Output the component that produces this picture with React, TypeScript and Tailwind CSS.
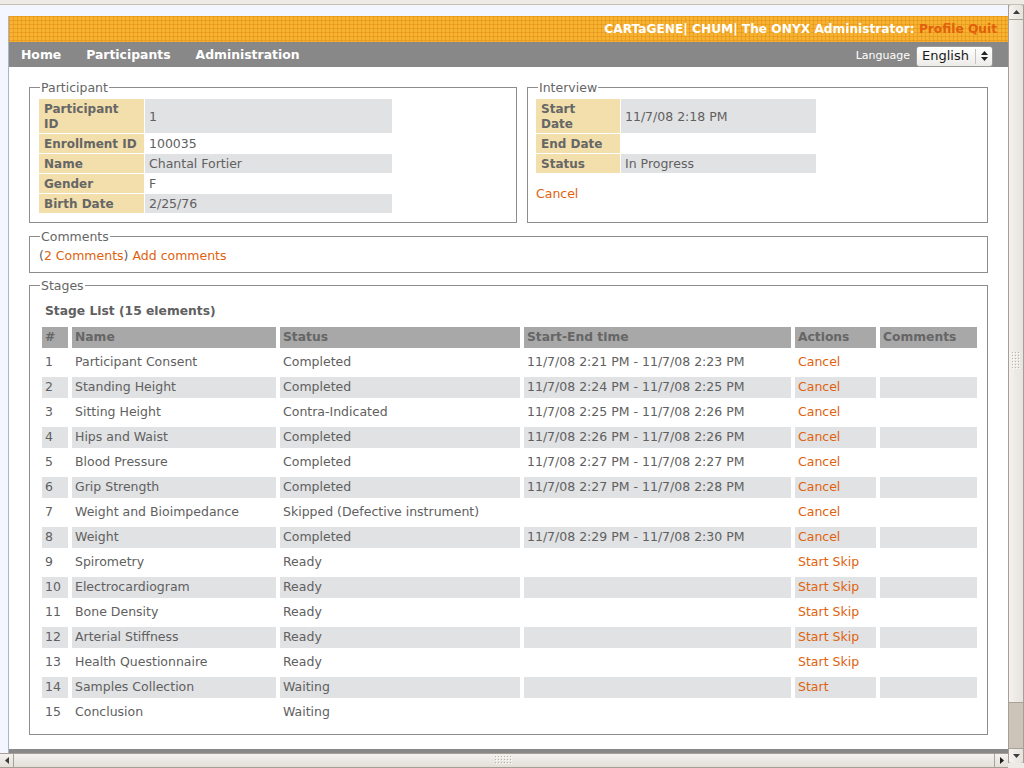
import React from "react";

type Stage = { n: string; name: string; status: string; time: string; actions: string[] };

const T = (a: string, b: string) => `11/7/08 ${a} PM - 11/7/08 ${b} PM`;

const stages: Stage[] = [
  { n: "1", name: "Participant Consent", status: "Completed", time: T("2:21", "2:23"), actions: ["Cancel"] },
  { n: "2", name: "Standing Height", status: "Completed", time: T("2:24", "2:25"), actions: ["Cancel"] },
  { n: "3", name: "Sitting Height", status: "Contra-Indicated", time: T("2:25", "2:26"), actions: ["Cancel"] },
  { n: "4", name: "Hips and Waist", status: "Completed", time: T("2:26", "2:26"), actions: ["Cancel"] },
  { n: "5", name: "Blood Pressure", status: "Completed", time: T("2:27", "2:27"), actions: ["Cancel"] },
  { n: "6", name: "Grip Strength", status: "Completed", time: T("2:27", "2:28"), actions: ["Cancel"] },
  { n: "7", name: "Weight and Bioimpedance", status: "Skipped (Defective instrument)", time: "", actions: ["Cancel"] },
  { n: "8", name: "Weight", status: "Completed", time: T("2:29", "2:30"), actions: ["Cancel"] },
  { n: "9", name: "Spirometry", status: "Ready", time: "", actions: ["Start", "Skip"] },
  { n: "10", name: "Electrocardiogram", status: "Ready", time: "", actions: ["Start", "Skip"] },
  { n: "11", name: "Bone Density", status: "Ready", time: "", actions: ["Start", "Skip"] },
  { n: "12", name: "Arterial Stiffness", status: "Ready", time: "", actions: ["Start", "Skip"] },
  { n: "13", name: "Health Questionnaire", status: "Ready", time: "", actions: ["Start", "Skip"] },
  { n: "14", name: "Samples Collection", status: "Waiting", time: "", actions: ["Start"] },
  { n: "15", name: "Conclusion", status: "Waiting", time: "", actions: [] },
];

function Fieldset({ legend, className, children }: { legend: string; className: string; children: React.ReactNode }) {
  return (
    <fieldset className={className}>
      <legend className="ml-[10px] px-px text-[12.5px] leading-[15px] text-[#666]">{legend}</legend>
      {children}
    </fieldset>
  );
}

function Label({ children }: { children: React.ReactNode }) {
  return (
    <div className="flex items-center bg-[#f2dfab] px-[5px] pb-[1px] pt-[3px] text-[12px] font-bold leading-[15px] text-[#666]">
      {children}
    </div>
  );
}

function Val({ children, grey }: { children?: React.ReactNode; grey?: boolean }) {
  return (
    <div
      className={
        grey
          ? "flex items-center bg-[#e1e2e4] px-[4px] pb-[2px] pt-[2px] text-[12.5px] leading-[15px] text-[#606060]"
          : "flex items-center bg-white px-[4px] pb-[2px] pt-[2px] text-[12.5px] leading-[15px] text-[#606060]"
      }
    >
      {children}
    </div>
  );
}

function Grip({ vertical }: { vertical?: boolean }) {
  const dots: React.ReactNode[] = [];
  const cols = vertical ? 3 : 6;
  const rows = vertical ? 6 : 3;
  for (let c = 0; c < cols; c++) {
    for (let r = 0; r < rows; r++) {
      dots.push(<rect key={`d${c}-${r}`} x={c * 3} y={r * 3} width="1" height="1" fill="#b9b2a8" />);
      dots.push(<rect key={`l${c}-${r}`} x={c * 3 + 1} y={r * 3 + 1} width="1" height="1" fill="#ffffff" />);
    }
  }
  return (
    <svg width={cols * 3} height={rows * 3} viewBox={`0 0 ${cols * 3} ${rows * 3}`}>
      {dots}
    </svg>
  );
}

function VScroll() {
  return (
    <div className="flex h-[758px] w-[16px] flex-col border-x border-[#a79f95] bg-[#cdc4b9]">
      <div className="flex h-[15px] items-center justify-center rounded-t-[3px] border-b border-[#aaa298] bg-gradient-to-r from-[#f5f3f0] to-[#e6e2dc]">
        <svg width="7" height="4" viewBox="0 0 7 4">
          <path d="M0 4 L3.5 0 L7 4Z" fill="#3c3c3c" />
        </svg>
      </div>
      <div className="flex h-[683px] items-center justify-center border-b border-[#aaa298] bg-gradient-to-r from-[#f4f2ef] to-[#e7e3de]">
        <Grip vertical />
      </div>
      <div className="flex-1" />
      <div className="flex h-[15px] items-center justify-center rounded-b-[3px] border-t border-[#aaa298] bg-gradient-to-r from-[#f5f3f0] to-[#e6e2dc]">
        <svg width="7" height="4" viewBox="0 0 7 4">
          <path d="M0 0 L3.5 4 L7 0Z" fill="#3c3c3c" />
        </svg>
      </div>
    </div>
  );
}

function HScroll() {
  return (
    <div className="flex h-[15px] w-[1008px] border-y border-[#a79f95] bg-gradient-to-b from-[#f4f2ef] to-[#e3dfd9]">
      <div className="flex w-[14px] items-center justify-center border-r border-[#aaa298]">
        <svg width="4" height="7" viewBox="0 0 4 7">
          <path d="M4 0 L0 3.5 L4 7Z" fill="#3c3c3c" />
        </svg>
      </div>
      <div className="flex flex-1 items-center justify-center border-r border-[#aaa298]">
        <Grip />
      </div>
      <div className="flex w-[13px] items-center justify-center">
        <svg width="4" height="7" viewBox="0 0 4 7">
          <path d="M0 0 L4 3.5 L0 7Z" fill="#1e1e1e" />
        </svg>
      </div>
    </div>
  );
}

export default function App() {
  return (
    <div className="flex h-[768px] w-[1024px] flex-col overflow-hidden bg-[#edeae5] font-['DejaVu_Sans',sans-serif]">
      <div className="h-[5px] border-b border-[#c8c0b6] bg-[#eeebe7]" />
      <div className="flex h-[763px]">
        <div className="flex w-[1008px] flex-col">
          <div className="h-[748px] overflow-hidden bg-[#f3f6fe] pl-[8px] pt-[11px]">
            <div className="flex h-[737px] w-[1000px] flex-col border-l border-[#a9b6c8] bg-white">
              {/* Orange header */}
              <div className="flex h-[26px] items-center justify-end bg-[#f8b232] bg-[linear-gradient(to_right,rgba(214,128,8,0.35)_1px,transparent_1px),linear-gradient(to_bottom,rgba(214,128,8,0.35)_1px,transparent_1px)] bg-[length:4px_4px] pr-[11px] text-[12.2px] font-bold text-white">
                <span>CARTaGENE| CHUM| The ONYX Administrator:&nbsp;</span>
                <span className="text-[#e0600c]">Profile Quit</span>
              </div>
              {/* Nav */}
              <div className="flex h-[25px] items-center bg-[#888888] pl-[12px] pr-[15px]">
                <div className="flex gap-[25px] pt-[2px] text-[12.4px] font-bold text-white">
                  <span>Home</span>
                  <span>Participants</span>
                  <span>Administration</span>
                </div>
                <div className="ml-auto mt-[3px] flex items-center gap-[6px]">
                  <span className="pt-px text-[11px] text-white">Language</span>
                  <div className="flex h-[21px] w-[77px] items-center rounded-[3px] border border-[#9a9a9a] bg-gradient-to-b from-[#ffffff] to-[#ecebe8]">
                    <span className="flex-1 pl-[5px] text-[13px] text-[#1a1a1a]">English</span>
                    <div className="h-[15px] w-px bg-[#c8c4be]" />
                    <div className="flex w-[16px] flex-col items-center gap-[2px]">
                      <svg width="7" height="4" viewBox="0 0 7 4">
                        <path d="M0 4 L3.5 0 L7 4Z" fill="#222" />
                      </svg>
                      <svg width="7" height="4" viewBox="0 0 7 4">
                        <path d="M0 0 L3.5 4 L7 0Z" fill="#222" />
                      </svg>
                    </div>
                  </div>
                </div>
              </div>
              {/* Content */}
              <div className="flex-1 overflow-hidden px-[20px] pt-[13px]">
                <div className="grid grid-cols-[488px_461px] gap-x-[10px]">
                  <Fieldset legend="Participant" className="border border-[#8d8d8d] pb-[9px]">
                    <div className="ml-[9px] mt-[4px] grid w-max grid-cols-[105px_247px] gap-px">
                      <Label>
                        Participant
                        <br />
                        ID
                      </Label>
                      <Val grey>1</Val>
                      <Label>Enrollment ID</Label>
                      <Val>100035</Val>
                      <Label>Name</Label>
                      <Val grey>Chantal Fortier</Val>
                      <Label>Gender</Label>
                      <Val>F</Val>
                      <Label>Birth Date</Label>
                      <Val grey>2/25/76</Val>
                    </div>
                  </Fieldset>
                  <Fieldset legend="Interview" className="border border-[#8d8d8d] pb-[9px]">
                    <div className="ml-[8px] mt-[4px] grid w-max grid-cols-[84px_195px] gap-px">
                      <Label>
                        Start
                        <br />
                        Date
                      </Label>
                      <Val grey>11/7/08 2:18 PM</Val>
                      <Label>End Date</Label>
                      <Val>&nbsp;</Val>
                      <Label>Status</Label>
                      <Val grey>In Progress</Val>
                    </div>
                    <div className="ml-[8px] mt-[13px] text-[12.5px] leading-[15px] text-[#e0620e]">Cancel</div>
                  </Fieldset>
                </div>

                <Fieldset legend="Comments" className="mt-[6px] border border-[#8d8d8d] pb-[9px]">
                  <div className="ml-[9px] pt-[4px] text-[12.5px] leading-[15px]">
                    <span className="text-[#606060]">(</span>
                    <span className="text-[#e0620e]">2 Comments</span>
                    <span className="text-[#606060]">)</span>{" "}
                    <span className="text-[#e0620e]">Add comments</span>
                  </div>
                </Fieldset>

                <Fieldset legend="Stages" className="mt-[5px] border border-[#8d8d8d] pb-[11px]">
                  <div className="ml-[15px] pt-[11px] text-[12.3px] font-bold leading-[15px] text-[#606060]">
                    Stage List (15 elements)
                  </div>
                  <div className="ml-[12px] mt-[8px] grid w-max grid-cols-[26px_204px_240px_267px_81px_97px] gap-[4px] text-[12.5px] text-[#606060]">
                    {["#", "Name", "Status", "Start-End time", "Actions", "Comments"].map((h) => (
                      <div key={h} className="flex h-[21px] items-center bg-[#a8a8a8] px-[3px] text-[12.3px] font-bold text-[#666]">
                        {h}
                      </div>
                    ))}
                    {stages.map((s, i) => {
                      const cell =
                        i % 2 === 1
                          ? "flex h-[21px] items-center bg-[#e1e2e4] px-[3px] whitespace-nowrap"
                          : "flex h-[21px] items-center bg-white px-[3px] whitespace-nowrap";
                      return (
                        <React.Fragment key={s.n}>
                          <div className={cell}>{s.n}</div>
                          <div className={cell}>{s.name}</div>
                          <div className={cell}>{s.status}</div>
                          <div className={cell}>{s.time}</div>
                          <div className={cell}>
                            <span className="text-[#e0620e]">{s.actions.join(" ")}</span>
                          </div>
                          <div className={cell} />
                        </React.Fragment>
                      );
                    })}
                  </div>
                </Fieldset>
              </div>
              <div className="h-[4px] bg-[#888888]" />
            </div>
          </div>
          <HScroll />
        </div>
        <div className="flex w-[16px] flex-col">
          <VScroll />
        </div>
      </div>
    </div>
  );
}
